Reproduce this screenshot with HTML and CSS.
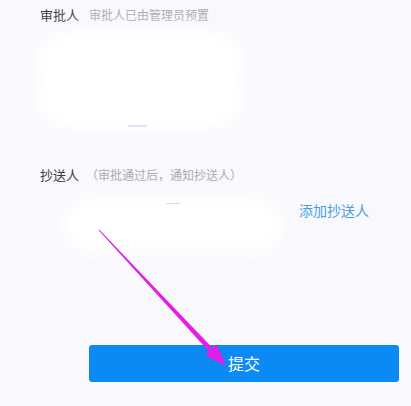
FILE: index.html
```html
<!DOCTYPE html>
<html lang="zh-CN">
<head>
<meta charset="utf-8">
<title>审批</title>
<link rel="stylesheet" href="styles.css">
</head>
<body>
<div class="page">
  <div class="content">
    <div class="head head-approver">
      <span class="label">审批人</span>
      <span class="hint hint-approver">审批人已由管理员预置</span>
    </div>
    <div class="blob-wrap blob-wrap-approver">
      <div class="blob blob-approver"></div>
      <span class="blob-line"></span>
    </div>

    <div class="head head-cc">
      <span class="label">抄送人</span>
      <span class="hint hint-cc">（审批通过后，通知抄送人）</span>
    </div>
    <div class="cc-row">
      <div class="blob-wrap blob-wrap-cc">
        <div class="blob blob-cc"></div>
        <span class="speck"></span>
      </div>
      <a class="add-cc">添加抄送人</a>
    </div>
  </div>
  <div class="submit">提交</div>

  <svg class="arrow" width="411" height="406" viewBox="0 0 411 406" aria-hidden="true">
    <polygon points="99.4,229.7 212.8,348.3 216.8,344.5 226,366 205.2,355.5 209.2,351.7 98.6,230.3" fill="#e31ee6"/>
  </svg>
</div>
</body>
</html>
```

FILE: styles.css
```css
html, body {
  margin: 0;
  padding: 0;
}

body {
  background: #f8f8fd;
  font-family: "Noto Sans CJK SC", "Noto Sans", sans-serif;
  width: 411px;
  height: 406px;
  overflow: hidden;
}

.page {
  position: relative;
  width: 411px;
  height: 406px;
}

.content {
  padding-left: 40px;
  padding-top: 5px;
}

.head {
  display: flex;
  align-items: baseline;
  height: 20px;
  line-height: 20px;
  white-space: nowrap;
}

.label {
  font-size: 13px;
  color: #3a3a3a;
}

.hint {
  font-size: 12px;
  color: #ababab;
}

.hint-approver {
  margin-left: 10px;
}

.hint-cc {
  margin-left: 7px;
}

.blob-wrap {
  position: relative;
}

.blob {
  background: #ffffff;
  border-radius: 30px;
  filter: blur(10px);
  width: 100%;
  height: 100%;
}

.blob-wrap-approver {
  margin: 5px 0 0 -5px;
  width: 210px;
  height: 100px;
}

.blob-line {
  position: absolute;
  left: 93px;
  bottom: 3px;
  width: 19px;
  height: 2px;
  background: #dde6f4;
  filter: blur(0.6px);
}

.head-cc {
  margin-top: 35px;
}

.cc-row {
  display: flex;
  align-items: flex-start;
  margin-top: 10px;
  height: 60px;
}

.blob-wrap-cc {
  margin-left: 20px;
  width: 225px;
  height: 60px;
}

.speck {
  position: absolute;
  left: 106px;
  top: 8px;
  width: 14px;
  height: 1px;
  background: #dcdcdc;
}

.add-cc {
  margin-left: auto;
  margin-right: 42px;
  padding-top: 5px;
  font-size: 14px;
  line-height: 20px;
  color: #4a9fe2;
  white-space: nowrap;
}

.submit {
  margin: 90px 12px 0 89px;
  height: 37px;
  line-height: 37px;
  border-radius: 3px;
  background: #0a8af2;
  color: #ffffff;
  font-size: 16px;
  text-align: center;
}

.arrow {
  position: absolute;
  left: 0;
  top: 0;
  pointer-events: none;
}
```
